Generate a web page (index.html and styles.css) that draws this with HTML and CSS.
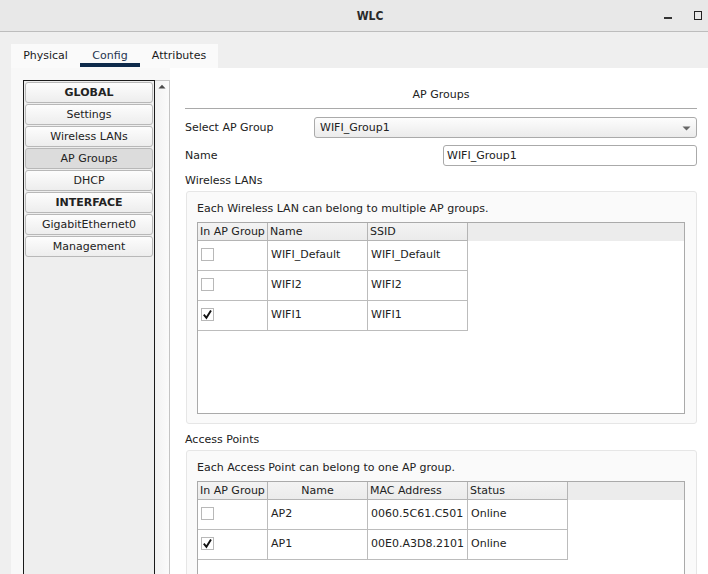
FILE: index.html
```html
<!DOCTYPE html>
<html>
<head>
<meta charset="utf-8">
<link rel="stylesheet" href="styles.css">
</head>
<body>
<div class="titlebar">
  <div class="title">WLC</div>
  <div class="controls">
    <span class="minimize"></span>
    <span class="maximize"></span>
  </div>
</div>
<div class="window">
  <div class="tabs">
    <div class="tab tab-physical">Physical</div>
    <div class="tab tab-config active">Config</div>
    <div class="tab tab-attr">Attributes</div>
  </div>
  <div class="panel">
    <div class="leftcol">
      <div class="sidebar">
        <div class="nav bold">GLOBAL</div>
        <div class="nav">Settings</div>
        <div class="nav">Wireless LANs</div>
        <div class="nav selected">AP Groups</div>
        <div class="nav">DHCP</div>
        <div class="nav bold">INTERFACE</div>
        <div class="nav">GigabitEthernet0</div>
        <div class="nav">Management</div>
      </div>
      <div class="scrollbar">
        <svg class="scroll-up" width="8" height="5" viewBox="0 0 8 5"><path d="M0.5 4.5 L4 0.8 L7.5 4.5 Z" fill="#4a4a4a"/></svg>
      </div>
    </div>
    <div class="content">
      <div class="section-title">AP Groups</div>
      <div class="row row-select">
        <div class="label">Select AP Group</div>
        <div class="select">
          <span>WIFI_Group1</span>
          <svg width="9" height="5" viewBox="0 0 9 5"><path d="M0.5 0.5 L8.5 0.5 L4.5 4.5 Z" fill="#666"/></svg>
        </div>
      </div>
      <div class="row row-name">
        <div class="label">Name</div>
        <div class="input">WIFI_Group1</div>
      </div>
      <div class="group-label">Wireless LANs</div>
      <div class="box box-wlan">
        <div class="box-text">Each Wireless LAN can belong to multiple AP groups.</div>
        <div class="tbl tbl-wlan">
          <div class="thead">
            <div class="th c1">In AP Group</div>
            <div class="th c2">Name</div>
            <div class="th c3">SSID</div>
          </div>
          <div class="tr">
            <div class="td c1"><span class="cb"></span></div>
            <div class="td c2">WIFI_Default</div>
            <div class="td c3">WIFI_Default</div>
          </div>
          <div class="tr">
            <div class="td c1"><span class="cb"></span></div>
            <div class="td c2">WIFI2</div>
            <div class="td c3">WIFI2</div>
          </div>
          <div class="tr">
            <div class="td c1"><span class="cb"><svg width="11" height="11" viewBox="0 0 11 11"><path d="M1.8 5.6 L4.4 8.8 L9 1.4" fill="none" stroke="#111" stroke-width="1.9"/></svg></span></div>
            <div class="td c2">WIFI1</div>
            <div class="td c3">WIFI1</div>
          </div>
        </div>
      </div>
      <div class="group-label">Access Points</div>
      <div class="box box-ap">
        <div class="box-text">Each Access Point can belong to one AP group.</div>
        <div class="tbl tbl-ap">
          <div class="thead">
            <div class="th c1">In AP Group</div>
            <div class="th c2 center">Name</div>
            <div class="th c3">MAC Address</div>
            <div class="th c4">Status</div>
          </div>
          <div class="tr">
            <div class="td c1"><span class="cb"></span></div>
            <div class="td c2">AP2</div>
            <div class="td c3">0060.5C61.C501</div>
            <div class="td c4">Online</div>
          </div>
          <div class="tr">
            <div class="td c1"><span class="cb"><svg width="11" height="11" viewBox="0 0 11 11"><path d="M1.8 5.6 L4.4 8.8 L9 1.4" fill="none" stroke="#111" stroke-width="1.9"/></svg></span></div>
            <div class="td c2">AP1</div>
            <div class="td c3">00E0.A3D8.2101</div>
            <div class="td c4">Online</div>
          </div>
        </div>
      </div>
    </div>
  </div>
</div>
</body>
</html>
```

FILE: styles.css
```css
* { box-sizing: border-box; }
html, body {
  margin: 0;
  width: 708px;
  height: 574px;
  overflow: hidden;
}
body {
  background: #efefef;
  font-family: "DejaVu Sans", "Liberation Sans", sans-serif;
  font-size: 11px;
  color: #222;
  display: flex;
  flex-direction: column;
}
.titlebar {
  height: 32px;
  flex: none;
  background: #e8e8e8;
  border-bottom: 1px solid #bdbdbd;
  display: flex;
  align-items: center;
}
.title {
  flex: 1;
  text-align: center;
  padding-left: 82px;
  font-family: "DejaVu Sans Condensed", "DejaVu Sans", sans-serif;
  font-weight: bold;
  font-size: 12px;
  color: #2a2a2a;
}
.controls {
  width: 50px;
  display: flex;
  align-items: center;
  gap: 22px;
  padding-left: 6px;
}
.minimize {
  width: 8px;
  height: 2px;
  background: #333;
  margin-top: 4px;
}
.maximize {
  width: 8px;
  height: 9px;
  border: 1.5px solid #222;
  margin-top: -1px;
}
.window {
  flex: 1;
  display: flex;
  flex-direction: column;
  padding: 12px 0 0 11px;
  min-height: 0;
}
.tabs {
  display: flex;
  width: 207px;
  height: 24px;
  flex: none;
  background: #fafafa;
}
.tab {
  height: 24px;
  line-height: 24px;
  text-align: center;
  color: #1a1a1a;
}
.tab-physical { width: 69px; }
.tab-config { width: 60px; }
.tab-attr { width: 78px; }
.tab.active {
  color: #1f3550;
  background: linear-gradient(#0e2a4b, #0e2a4b) no-repeat 0 19px / 100% 4px;
}
.panel {
  flex: 1;
  display: flex;
  min-height: 0;
}
.leftcol {
  display: flex;
  background: #f8f8f8;
  padding: 12px 0 0 12px;
}
.sidebar {
  width: 132px;
  border: 1px solid #1a1a1a;
  border-bottom: none;
  background: #eeeeee;
  padding: 1px;
  display: flex;
  flex-direction: column;
  gap: 1px;
}
.nav {
  height: 21px;
  line-height: 19px;
  border: 1px solid #b8b8b8;
  border-radius: 3px;
  background: linear-gradient(#fdfdfd, #ededed);
  text-align: center;
  color: #222;
}
.nav.bold { font-weight: bold; }
.nav.selected { background: #dcdcdc; }
.scrollbar {
  width: 15px;
  border: 1px solid #c4c4c4;
  border-left: none;
  border-bottom: none;
  background: linear-gradient(90deg, #f2f2f2, #fbfbfb);
  display: flex;
  justify-content: center;
  padding-top: 3px;
}
.scroll-up { display: block; }
.content {
  flex: 1;
  background: #ffffff;
  padding: 20px 11px 0 15px;
}
.section-title {
  text-align: center;
  line-height: 14px;
  padding-bottom: 6px;
  border-bottom: 1px solid #a9a9a9;
  color: #222;
}
.row {
  display: flex;
  align-items: center;
}
.row-select { margin-top: 8px; }
.row-name { margin-top: 7px; }
.label { width: 129px; }
.select {
  flex: 1;
  height: 21px;
  border: 1px solid #aaa;
  border-radius: 3px;
  background: linear-gradient(#fdfdfd, #ebebeb);
  display: flex;
  align-items: center;
  justify-content: space-between;
  padding: 0 5px 0 5px;
}
.select svg { display: block; margin-top: 1px; }
.input {
  margin-left: auto;
  width: 254px;
  height: 21px;
  line-height: 19px;
  border: 1px solid #aaa;
  border-radius: 3px;
  background: #fff;
  padding-left: 3px;
}
.group-label {
  margin-top: 8px;
  line-height: 14px;
}
.box {
  margin: 3px 0 0 1px;
  border: 1px solid #e6e6e6;
  border-radius: 3px;
  background: #fafafa;
  padding: 10px 11px 9px 10px;
}
.box-ap { padding-bottom: 40px; }
.box-wlan + .group-label { margin-top: 9px; }
.box-text { line-height: 14px; }
.tbl {
  margin-top: 6px;
  border: 1px solid #aaa;
  background: #fff;
}
.tbl-wlan { height: 192px; }
.tbl-ap { height: 140px; }
.thead {
  display: flex;
  height: 18px;
  background: #ececec;
}
.th {
  height: 18px;
  line-height: 17px;
  padding: 0 2px;
  border-right: 1px solid #b4b4b4;
  border-bottom: 1px solid #b4b4b4;
  background: linear-gradient(#f3f3f3, #ebebeb);
  white-space: nowrap;
}
.th.center { text-align: center; }
.tr { display: flex; }
.td {
  height: 30px;
  border-right: 1px solid #bcbcbc;
  border-bottom: 1px solid #bcbcbc;
  display: flex;
  align-items: center;
  padding: 0 3px 2px 3px;
  white-space: nowrap;
}
.c1 { width: 70px; }
.c2 { width: 100px; }
.c3 { width: 100px; }
.c4 { width: 100px; }
.cb {
  width: 13px;
  height: 13px;
  border: 1px solid #b8b8b8;
  background: #fff;
  display: flex;
  align-items: center;
  justify-content: center;
}
.cb svg { display: block; }
```
